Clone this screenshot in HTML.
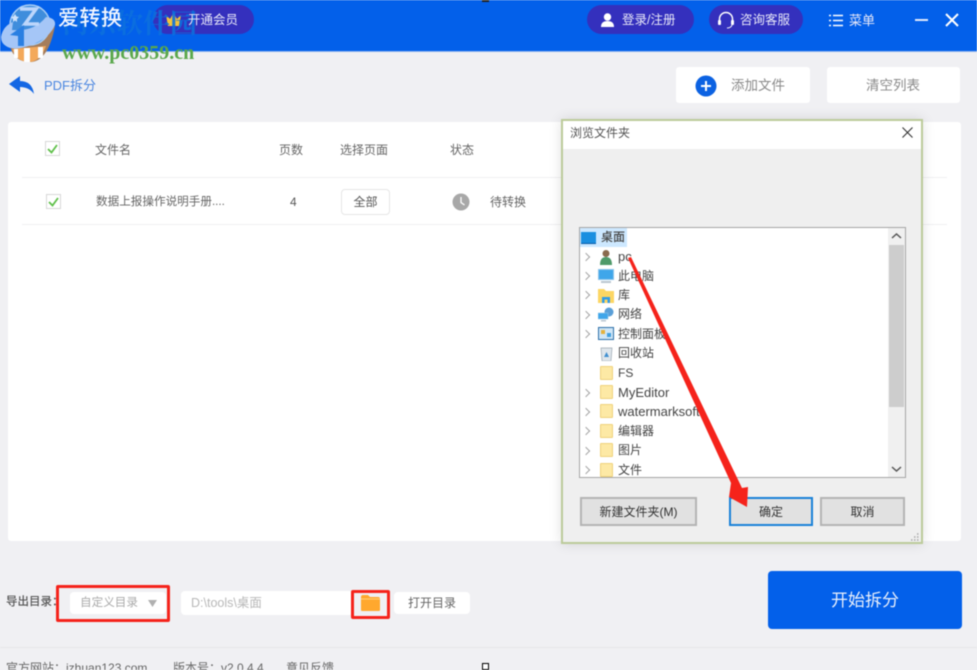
<!DOCTYPE html>
<html lang="zh-CN"><head><meta charset="utf-8"><title>爱转换</title>
<style>
html,body{margin:0;padding:0;background:#f0f0f3}
#p{position:relative;width:977px;height:670px;overflow:hidden;background:#f0f0f3;font-family:"Liberation Sans","Noto Sans CJK SC",sans-serif;font-size:12px;color:#555;filter:blur(.4px)}
#p div,#p span.t,#p svg{position:absolute}
.t{position:absolute;white-space:nowrap;line-height:1}
.pill{background:#3430bd;border-radius:15px;height:29px;top:5px}
.w{color:#e8e8f8}
.btn{background:#e1e1e1;border:2px solid #b4b4b4;box-sizing:border-box;height:29px;top:497px;text-align:center;line-height:26px;color:#333;font-size:12px}
.tr{left:618px;color:#444;font-size:12px}
.chev{width:5px;height:5px;border-top:1.5px solid #a6a6a6;border-right:1.5px solid #a6a6a6;transform:rotate(45deg);left:583px}
.fold{left:600px;width:13px;height:14px;background:#fde9a5;border:1px solid #efd27c;box-sizing:border-box;border-radius:1px}
</style></head><body><div id="p">

<div style="left:0;top:0;width:977px;height:51px;background:#0360ea"></div>
<div style="left:0;top:51px;width:977px;height:1px;background:#8fb4f0"></div>

<div class="pill" style="left:153px;width:101px"></div>
<svg style="left:165px;top:13px" width="17" height="14" viewBox="0 0 17 14"><path d="M1 2 L5 6 L8.500 0 L12 6 L16 2 L14 13 H3Z" fill="#f4c43a"/></svg>

<span class="t" style="left:62px;top:11px;font-size:27px;font-family:'Liberation Serif','Noto Serif CJK SC',serif;font-weight:700;color:#0c70de;opacity:.9">河东软件园</span>

<!-- logo watermark -->
<svg style="left:0;top:0" width="60" height="64" viewBox="0 0 60 64">
<path d="M10 46 Q14 62 30 62 Q48 62 55 26 L30 40Z" fill="#a57d5b"/>
<path d="M12 49 L46 46 Q40 62 29 62 Q17 62 12 49Z" fill="#f3a95b"/>
<rect x="14" y="49" width="4" height="9" fill="#fff"/><rect x="24" y="48" width="6" height="14" fill="#fff"/><rect x="38" y="47" width="5" height="11" fill="#fff"/>
<circle cx="30" cy="25" r="20" fill="#3f8ddc" stroke="#a9cdf5" stroke-width="1.500"/>
<path d="M1 37 Q3 26 13 22 L12 30 Q34 32 46 17 Q56 18 55 25 Q50 37 34 44 Q14 52 6 46 Q1 43 1 37Z" fill="#a5c6f7"/>
<path d="M20 9 H36 L25 24 H39" fill="none" stroke="#bcd6fb" stroke-width="3.500"/>
<path d="M10 35 L24 25 V46 H18 V36Z" fill="#2a7fe2"/>
<path d="M15 14l1.500 2.500 2.500.5-2 2v3l-2-1.500-2 1.500v-3l-2-2 2.500-.5z" fill="#cfe2fb"/>
</svg>
<span class="t" style="left:58px;top:8px;font-size:21px;color:#f2f6ff;font-weight:500;letter-spacing:.5px">爱转换</span>
<span class="t w" style="left:188px;top:14px;font-size:12.500px">开通会员</span>

<div class="pill" style="left:587px;width:107px"></div>
<svg style="left:600px;top:13px" width="15" height="14" viewBox="0 0 15 14"><circle cx="7.500" cy="4" r="3.700" fill="#fff"/><path d="M1 14 Q1 8 7.500 8 Q14 8 14 14Z" fill="#fff"/></svg>
<span class="t w" style="left:622px;top:14px;font-size:12.500px">登录/注册</span>
<div class="pill" style="left:709px;width:94px"></div>
<svg style="left:717px;top:10px" width="18" height="20" viewBox="0 0 18 20"><path d="M2.500 12 V9 a6.500 6.500 0 0 1 13 0 V12" fill="none" stroke="#fff" stroke-width="1.500"/><rect x="1" y="10" width="3" height="5" rx="1" fill="#fff"/><rect x="14" y="10" width="3" height="5" rx="1" fill="#fff"/><path d="M15 15 Q14 18 10 18" fill="none" stroke="#fff"/></svg>
<span class="t w" style="left:740px;top:14px;font-size:12.500px">咨询客服</span>
<svg style="left:829px;top:14px" width="14" height="13" viewBox="0 0 14 13"><path d="M4 1.500H14M4 6.500H14M4 11.500H14M0 1.500H2M0 6.500H2M0 11.500H2" stroke="#fff" stroke-width="1.500"/></svg>
<span class="t w" style="left:849px;top:14px;font-size:13px">菜单</span>
<svg style="left:914px;top:13px" width="50" height="14" viewBox="0 0 50 14"><path d="M1 7H14" stroke="#dfe8fb" stroke-width="2"/><path d="M32 1L44 13M44 1L32 13" stroke="#fff" stroke-width="2"/></svg>

<span class="t" style="left:62px;top:43px;font-size:20px;font-weight:700;font-family:'Liberation Serif',serif;color:#5aa84c">www.pc0359.cn</span>

<svg style="left:9px;top:75px" width="26" height="20" viewBox="0 0 26 20"><path d="M0 9 L11 1 V6 Q23 6 25 19 Q20 12 11 12 V17Z" fill="#1467e4"/></svg>
<span class="t" style="left:44px;top:79px;color:#4a86e0;font-size:13px">PDF拆分</span>

<div style="left:676px;top:67px;width:134px;height:36px;background:#fff;border-radius:3px"></div>
<svg style="left:695px;top:75px" width="22" height="22" viewBox="0 0 22 22"><circle cx="11" cy="11" r="10.500" fill="#0c62e2"/><path d="M6 11H16M11 6V16" stroke="#fff" stroke-width="2"/></svg>
<span class="t" style="left:731px;top:79px;font-size:13.500px;color:#8a8a8a">添加文件</span>
<div style="left:827px;top:67px;width:133px;height:36px;background:#fff;border-radius:3px"></div>
<span class="t" style="left:866px;top:79px;font-size:13.500px;color:#8a8a8a">清空列表</span>

<!-- list panel -->
<div style="left:8px;top:122px;width:953px;height:419px;background:#fff;border-radius:3px"></div>
<div style="left:22px;top:177px;width:925px;height:1px;background:#f0f0f2"></div>
<div style="left:22px;top:224px;width:925px;height:1px;background:#f0f0f2"></div>

<svg style="left:45px;top:141px" width="16" height="16" viewBox="0 0 16 16"><rect x=".5" y=".5" width="14" height="14" fill="#fff" stroke="#d8d8d8"/><path d="M3 8L6.500 11.500L12 4" fill="none" stroke="#5fc04a" stroke-width="1.800"/></svg>
<svg style="left:46px;top:194px" width="16" height="16" viewBox="0 0 16 16"><rect x=".5" y=".5" width="14" height="14" fill="#fff" stroke="#d8d8d8"/><path d="M3 8L6.500 11.500L12 4" fill="none" stroke="#5fc04a" stroke-width="1.800"/></svg>
<span class="t" style="left:95px;top:144px;color:#666">文件名</span>
<span class="t" style="left:279px;top:144px;color:#666">页数</span>
<span class="t" style="left:340px;top:144px;color:#666">选择页面</span>
<span class="t" style="left:450px;top:144px;color:#666">状态</span>
<span class="t" style="left:96px;top:196px;color:#666;font-size:11.600px">数据上报操作说明手册....</span>
<span class="t" style="left:290px;top:196px;color:#555">4</span>
<div style="left:341px;top:189px;width:47px;height:24px;border:1px solid #e6e6e6;border-radius:4px;background:#fff;text-align:center;line-height:24px;color:#555">全部</div>
<svg style="left:452px;top:193px" width="18" height="18" viewBox="0 0 18 18"><circle cx="9" cy="9" r="8.500" fill="#a8a8a8"/><path d="M9 4V9.500L12.500 12" fill="none" stroke="#fff" stroke-width="1.300"/></svg>
<span class="t" style="left:490px;top:196px;color:#666">待转换</span>

<!-- bottom -->
<span class="t" style="left:6px;top:597px;font-size:11.500px;color:#555;font-weight:500">导出目录：</span>
<div style="left:70px;top:592px;width:96px;height:22px;background:#fff;border-radius:4px"></div>
<span class="t" style="left:80px;top:597px;font-size:11.600px;color:#aaa">自定义目录</span>
<svg style="left:148px;top:600px" width="9" height="7" viewBox="0 0 9 7"><path d="M0 0H9L4.500 7Z" fill="#b0b0b0"/></svg>
<div style="left:181px;top:591px;width:172px;height:24px;background:#fff;border-radius:4px"></div>
<span class="t" style="left:191px;top:597px;font-size:12.500px;color:#b8b8b8">D:\tools\桌面</span>
<svg style="left:361px;top:595px" width="19" height="16" viewBox="0 0 19 16"><path d="M0 2Q0 0 2 0H7L9 2H17Q19 2 19 4V15Q19 16 18 16H1Q0 16 0 15Z" fill="#ffa82e"/><path d="M0 4H19" stroke="#ffd27a"/></svg>
<div style="left:394px;top:592px;width:76px;height:22px;background:#fff;border-radius:4px;text-align:center;line-height:23px;font-size:12px;color:#666">打开目录</div>
<div style="left:56px;top:585px;width:114px;height:37px;border:3px solid #f5231b;box-sizing:border-box;border-radius:2px"></div>
<div style="left:351px;top:590px;width:39px;height:29px;border:3px solid #f5231b;box-sizing:border-box;border-radius:2px"></div>
<div style="left:768px;top:571px;width:194px;height:58px;background:#0360ea;border-radius:4px;text-align:center;line-height:60px;font-size:17px;color:#e8effc">开始拆分</div>
<div style="left:0;top:647px;width:977px;height:1px;background:#e6e6e8"></div>
<span class="t" style="left:6px;top:662px;font-size:12px;color:#666">官方网站：jzhuan123.com</span>
<span class="t" style="left:173px;top:662px;font-size:12px;color:#666">版本号：v2.0.4.4</span>
<span class="t" style="left:286px;top:662px;font-size:12px;color:#666">意见反馈</span>
<div style="left:482px;top:663px;width:7px;height:7px;border:1px solid #000;background:#fff;box-sizing:border-box"></div>
<div style="left:482px;top:0;width:7px;height:2px;background:#222"></div>

<!-- dialog -->
<div style="left:561px;top:119px;width:362px;height:425px;background:#efefef;border:2px solid #bccb9a;box-sizing:border-box;box-shadow:0 0 12px rgba(0,0,0,.12)"></div>
<div style="left:563px;top:121px;width:358px;height:28px;background:#fff"></div>
<span class="t" style="left:570px;top:127px;font-size:12px;color:#555">浏览文件夹</span>
<svg style="left:902px;top:127px" width="11" height="11" viewBox="0 0 11 11"><path d="M.5 .5L10.500 10.500M10.500 .5L.5 10.500" stroke="#333" stroke-width="1.100"/></svg>

<div style="left:579px;top:227px;width:327px;height:251px;background:#fff;border:1px solid #a5a5a5;box-sizing:border-box"></div>
<div style="left:888px;top:228px;width:17px;height:249px;background:#f0f0f0"></div>
<div style="left:889px;top:245px;width:15px;height:162px;background:#cdcdcd"></div>
<svg style="left:891px;top:232px" width="11" height="8" viewBox="0 0 11 8"><path d="M1 6L5.500 2L10 6" fill="none" stroke="#555" stroke-width="1.500"/></svg>
<svg style="left:891px;top:465px" width="11" height="8" viewBox="0 0 11 8"><path d="M1 2L5.500 6L10 2" fill="none" stroke="#555" stroke-width="1.500"/></svg>

<div style="left:580px;top:228px;width:47px;height:19px;background:#cde8ff"></div>
<div style="left:581px;top:232px;width:15px;height:11px;background:#1a8fe0;border-bottom:1px solid #0b5da8"></div>
<span class="t tr" style="left:601px;top:231px;font-weight:500">桌面</span>

<div class="chev" style="top:254px"></div>
<svg style="left:599px;top:249px" width="14" height="16" viewBox="0 0 14 16"><circle cx="7" cy="4.500" r="3.500" fill="#8a6a4e"/><path d="M1 16Q1 8 7 8Q13 8 13 16Z" fill="#4f9a6a"/></svg>
<span class="t tr" style="top:250px;font-size:13px">pc</span>

<div class="chev" style="top:273px"></div>
<svg style="left:598px;top:269px" width="16" height="15" viewBox="0 0 16 15"><rect x=".5" y=".5" width="15" height="10" fill="#3fa6ea" stroke="#8cc4ea"/><rect x="3" y="12" width="10" height="2" fill="#b9c6d0"/></svg>
<span class="t tr" style="top:270px">此电脑</span>

<div class="chev" style="top:292px"></div>
<svg style="left:598px;top:288px" width="16" height="15" viewBox="0 0 16 15"><path d="M0 1H6L8 3H16V15H0Z" fill="#fcd663"/><path d="M4 15V9H12V15H9.500V11.500H6.500V15Z" fill="#2f9be8"/></svg>
<span class="t tr" style="top:289px">库</span>

<div class="chev" style="top:312px"></div>
<svg style="left:598px;top:307px" width="16" height="15" viewBox="0 0 16 15"><circle cx="11" cy="5" r="4.500" fill="#5a9fd8"/><rect x="0" y="6" width="10" height="6" fill="#3fa6ea" stroke="#8cc4ea" stroke-width=".6"/><rect x="3" y="13" width="5" height="1.500" fill="#b9c6d0"/></svg>
<span class="t tr" style="top:308px">网络</span>

<div class="chev" style="top:331px"></div>
<svg style="left:598px;top:327px" width="16" height="14" viewBox="0 0 16 14"><rect x=".5" y=".5" width="15" height="12" fill="#cfe6f7" stroke="#2d6fa8"/><rect x="3" y="3" width="4" height="4" fill="#e4b23c"/><rect x="9" y="6" width="4" height="4" fill="#3f9fe0"/></svg>
<span class="t tr" style="top:328px">控制面板</span>

<svg style="left:600px;top:346px" width="13" height="15" viewBox="0 0 13 15"><path d="M1 2H12L11 15H2Z" fill="#dfe6ec" stroke="#9aa6b0" stroke-width=".7"/><path d="M6.500 6L9 11H4Z" fill="#3f8fd0"/></svg>
<span class="t tr" style="top:347px">回收站</span>

<div class="fold" style="top:366px"></div><span class="t tr" style="top:367px">FS</span>
<div class="chev" style="top:390px"></div><div class="fold" style="top:385px"></div><span class="t tr" style="top:386px;font-size:13px">MyEditor</span>
<div class="chev" style="top:409px"></div><div class="fold" style="top:404px"></div><span class="t tr" style="top:405px;font-size:13px">watermarksoft</span>
<div class="chev" style="top:428px"></div><div class="fold" style="top:424px"></div><span class="t tr" style="top:425px">编辑器</span>
<div class="chev" style="top:448px"></div><div class="fold" style="top:443px"></div><span class="t tr" style="top:444px">图片</span>
<div class="chev" style="top:467px"></div><div class="fold" style="top:463px;height:14px"></div><span class="t tr" style="top:464px">文件</span>

<div class="btn" style="left:580px;width:117px">新建文件夹(M)</div>
<div class="btn" style="left:729px;width:84px;border-color:#1a82d8">确定</div>
<div class="btn" style="left:820px;width:85px">取消</div>
<svg style="left:910px;top:533px" width="10" height="9" viewBox="0 0 10 9"><path d="M7 1h1.500M4 4h1.500M7 4h1.500M1 7h1.500M4 7h1.500M7 7h1.500" stroke="#aaa" stroke-width="1.500"/></svg>

<!-- red arrow -->
<svg style="left:620px;top:250px" width="135" height="262" viewBox="620 250 135 262"><path d="M628 258 L731 483 L729 497 L747 507 L748 487 L742 488 L631 257Z" fill="#f5231b"/></svg>

</div></body></html>
